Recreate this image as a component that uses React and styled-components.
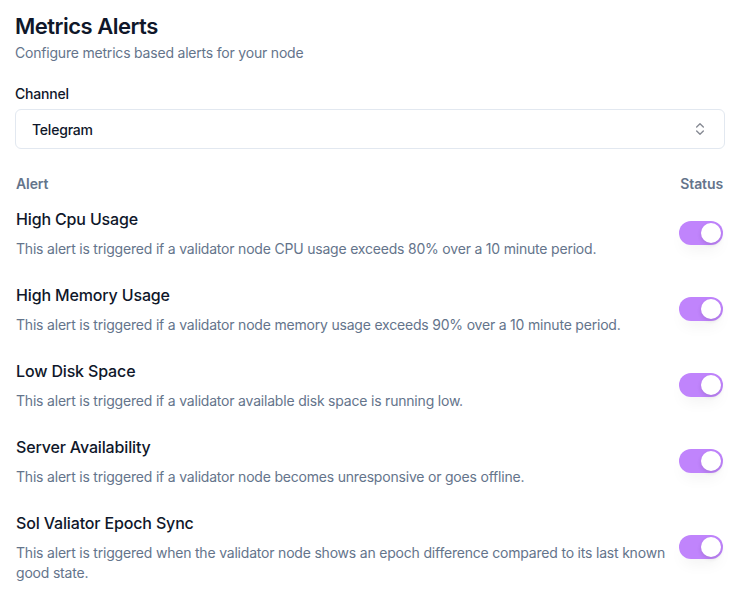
import styled, { createGlobalStyle } from "styled-components";
import { useState } from "react";
import { ChevronsUpDown } from "lucide-react";

const alerts = [
  {
    id: "cpu",
    title: "High Cpu Usage",
    text: "This alert is triggered if a validator node CPU usage exceeds 80% over a 10 minute period.",
  },
  {
    id: "mem",
    title: "High Memory Usage",
    text: "This alert is triggered if a validator node memory usage exceeds 90% over a 10 minute period.",
  },
  {
    id: "disk",
    title: "Low Disk Space",
    text: "This alert is triggered if a validator available disk space is running low.",
  },
  {
    id: "avail",
    title: "Server Availability",
    text: "This alert is triggered if a validator node becomes unresponsive or goes offline.",
  },
  {
    id: "epoch",
    title: "Sol Valiator Epoch Sync",
    text: "This alert is triggered when the validator node shows an epoch difference compared to its last known good state.",
  },
];

const App = () => {
  const [enabled, setEnabled] = useState(
    Object.fromEntries(alerts.map((a) => [a.id, true]))
  );

  return (
    <>
      <GlobalStyle />
      <Page>
        <Title>Metrics Alerts</Title>
        <Subtitle>Configure metrics based alerts for your node</Subtitle>

        <Label>Channel</Label>
        <Select>
          <span>Telegram</span>
          <ChevronsUpDown size={16} strokeWidth={2} />
        </Select>

        <Table>
          <HeadRow>
            <HeadCell>Alert</HeadCell>
            <HeadCell $right>Status</HeadCell>
          </HeadRow>
          {alerts.map((a) => (
            <Row key={a.id}>
              <div>
                <AlertTitle>{a.title}</AlertTitle>
                <AlertText>{a.text}</AlertText>
              </div>
              <Toggle
                $on={enabled[a.id]}
                onClick={() =>
                  setEnabled((s) => ({ ...s, [a.id]: !s[a.id] }))
                }
              >
                <span />
              </Toggle>
            </Row>
          ))}
        </Table>
      </Page>
    </>
  );
};

export default App;

/* ================= STYLES ================= */

const GlobalStyle = createGlobalStyle`
  body {
    margin: 0;
    background: #fff;
    font-family: Inter, "Noto Sans", sans-serif;
    color: #0f172a;
  }
`;

const Page = styled.div`
  width: 710px;
  padding: 12px 0 0 15px;
`;

const Title = styled.h1`
  margin: 0;
  font-size: 22px;
  line-height: 28px;
  font-weight: 600;
  letter-spacing: -0.5px;
  color: #0f172a;
`;

const Subtitle = styled.p`
  margin: 3px 0 0;
  font-size: 14px;
  line-height: 20px;
  letter-spacing: -0.2px;
  color: #64748b;
`;

const Label = styled.div`
  margin-top: 21px;
  font-size: 14px;
  line-height: 20px;
  font-weight: 500;
  letter-spacing: -0.2px;
  color: #0f172a;
`;

const Select = styled.div`
  margin-top: 5px;
  height: 40px;
  box-sizing: border-box;
  display: flex;
  align-items: center;
  justify-content: space-between;
  padding: 0 16px;
  border: 1px solid #e2e8f0;
  border-radius: 6px;
  font-size: 14px;
  font-weight: 500;
  letter-spacing: -0.2px;
  color: #0f172a;

  svg {
    color: #0f172a;
    opacity: 0.5;
  }
`;

const Table = styled.div`
  margin: 25px 2px 0 1px;
`;

const HeadRow = styled.div`
  display: flex;
  justify-content: space-between;
  height: 18px;
`;

const HeadCell = styled.div`
  font-size: 14px;
  line-height: 20px;
  font-weight: 600;
  letter-spacing: -0.1px;
  color: #64748b;
  text-align: ${(p) => (p.$right ? "right" : "left")};
`;

const Row = styled.div`
  display: grid;
  grid-template-columns: 1fr 44px;
  column-gap: 8px;
  align-items: center;
  padding: 15px 0 9px;
`;

const AlertTitle = styled.div`
  font-size: 16px;
  line-height: 24px;
  font-weight: 500;
  letter-spacing: -0.15px;
  color: #0f172a;
`;

const AlertText = styled.div`
  margin-top: 8px;
  font-size: 14px;
  line-height: 20px;
  letter-spacing: -0.2px;
  color: #64748b;
`;

const Toggle = styled.button`
  position: relative;
  width: 44px;
  height: 24px;
  padding: 2px;
  border: none;
  border-radius: 999px;
  background: ${(p) => (p.$on ? "#c084fc" : "#e2e8f0")};
  box-shadow: 0 8px 16px -4px rgba(0, 0, 0, 0.06);
  cursor: pointer;
  display: flex;
  align-items: center;

  span {
    width: 20px;
    height: 20px;
    border-radius: 50%;
    background: #fff;
    box-shadow: 0 2px 4px rgba(0, 0, 0, 0.12);
    transform: translateX(${(p) => (p.$on ? "20px" : "0")});
    transition: transform 0.2s ease;
  }
`;
